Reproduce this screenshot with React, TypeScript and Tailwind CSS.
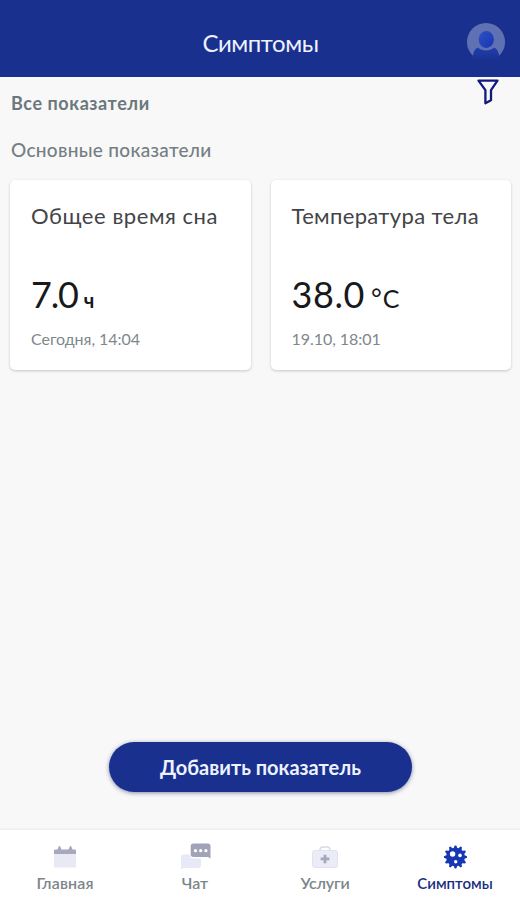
import type { ReactNode } from 'react';

interface Metric {
  title: string;
  value: string;
  unit: ReactNode;
  date: string;
  titleClass: string;
  valueClass: string;
  dateClass: string;
}

const metrics: Metric[] = [
  {
    title: 'Общее время сна',
    value: '7.0',
    unit: <span className="ml-[6px] text-[20px] font-bold">ч</span>,
    date: 'Сегодня, 14:04',
    titleClass: 'tracking-[0.55px]',
    valueClass: 'tracking-[-1.2px]',
    dateClass: 'tracking-[-0.05px]',
  },
  {
    title: 'Температура тела',
    value: '38.0',
    unit: (
      <>
        <span className="ml-[6px] text-[26px]">°</span>
        <span className="ml-px text-[25px]">C</span>
      </>
    ),
    date: '19.10, 18:01',
    titleClass: 'tracking-[0.35px]',
    valueClass: 'tracking-[0.6px]',
    dateClass: 'tracking-[-0.05px]',
  },
];

function AvatarIcon() {
  return (
    <svg width="38" height="38" viewBox="0 0 38 38">
      <defs>
        <linearGradient id="head" x1="0" y1="0" x2="1" y2="1">
          <stop offset="0" stopColor="#2c50c6" />
          <stop offset="1" stopColor="#1837b0" />
        </linearGradient>
        <linearGradient id="body" x1="0" y1="0" x2="0" y2="1">
          <stop offset="0" stopColor="#203fae" />
          <stop offset="1" stopColor="#1a308f" />
        </linearGradient>
      </defs>
      <path d="M6.3 33.2A19 19 0 1 1 31.7 33.2Z" fill="#6071b3" />
      <path d="M4.5 38L6.5 30C7.3 27 8.6 25.2 11.3 24.8C15.5 28.4 22.5 28.4 26.7 24.8C29.4 25.2 30.7 27 31.5 30L33.5 38Z" fill="url(#body)" />
      <ellipse cx="19.3" cy="16.4" rx="7.6" ry="8.5" fill="url(#head)" />
    </svg>
  );
}

function FilterIcon() {
  return (
    <svg width="22" height="26" viewBox="0 0 22 26" fill="none" stroke="#101b80" strokeWidth="2.3" strokeLinejoin="round">
      <path d="M1.5 1.6H20.5L14 11.2V21.2L8.4 24.2V11.2Z" />
    </svg>
  );
}

function CalendarIcon() {
  return (
    <svg width="22" height="22" viewBox="0 0 22 22">
      <path d="M0 8H22V21.5H0Z" fill="#e9e9f6" />
      <path d="M0 8V4.5Q0 3.5 1.5 3.5H3.5L5 0H6L7.5 3.5H14.5L16 0H17L18.5 3.5H20.5Q22 3.5 22 4.5V8Z" fill="#a7a8bd" />
    </svg>
  );
}

function ChatIcon() {
  return (
    <svg className="ml-[2px]" width="30" height="27" viewBox="0 0 30 27">
      <path d="M0 26.5V14Q0 11.5 2.5 11.5H9V13Q9 15.5 12 15.5H20V22Q20 25 17 25H3Z" fill="#e8e9f6" />
      <path d="M12.5 0.5H27Q29.5 0.5 29.5 3V15.5L27 14H12.5Q9.7 14 9.7 11.5V3Q9.7 0.5 12.5 0.5Z" fill="#a2a3b9" />
      <g fill="#fff">
        <circle cx="14.5" cy="7.7" r="1.6" />
        <circle cx="19.7" cy="7.7" r="1.6" />
        <circle cx="24.9" cy="7.7" r="1.6" />
      </g>
    </svg>
  );
}

function MedkitIcon() {
  return (
    <svg width="26" height="22" viewBox="0 0 26 22">
      <path d="M8 4.5V3.8Q8 1 11 1H15Q18 1 18 3.8V4.5" fill="none" stroke="#d8dae8" strokeWidth="1.5" />
      <rect x="0.5" y="4.5" width="25" height="17" rx="2.5" fill="#ebecf7" stroke="#e0e2f0" />
      <path d="M11.6 8.8H14.4V11.4H17.4V14.2H14.4V17.2H11.6V14.2H8.6V11.4H11.6Z" fill="#a5a7bf" />
    </svg>
  );
}

// spiky outline: 12 short teeth around the body
const spikes = Array.from({ length: 48 }, (_, i) => {
  const radius = i % 4 < 2 ? 11.6 : 9.3;
  const angle = ((i - 0.5) * Math.PI) / 24;
  return `${(12.5 + radius * Math.sin(angle)).toFixed(2)},${(12 - radius * Math.cos(angle)).toFixed(2)}`;
}).join(' ');

function VirusIcon() {
  return (
    <svg width="24" height="24" viewBox="0 0 24 24">
      <polygon points={spikes} fill="#1537b4" />
      <g fill="#fff">
        <circle cx="9.6" cy="9" r="2.7" />
        <circle cx="17" cy="10.4" r="1.8" />
        <circle cx="12.7" cy="16.8" r="1.7" />
      </g>
    </svg>
  );
}

const tabs = [
  { label: 'Главная', icon: <CalendarIcon />, labelClass: 'text-[#7c868a] text-base tracking-[0.15px]' },
  { label: 'Чат', icon: <ChatIcon />, labelClass: 'text-[#7c868a] text-base' },
  { label: 'Услуги', icon: <MedkitIcon />, labelClass: 'text-[#7c868a] text-base tracking-[-0.2px]' },
  { label: 'Симптомы', icon: <VirusIcon />, labelClass: 'text-[#1a2c80] text-[15px]' },
];

function MetricCard({ metric }: { metric: Metric }) {
  return (
    <div className="h-[190px] rounded-[5px] bg-white px-[21px] pt-5 whitespace-nowrap shadow-[0_1px_3px_rgba(0,0,0,0.2)]">
      <h3 className={`text-[22px] leading-8 text-[#434447] ${metric.titleClass}`}>{metric.title}</h3>
      <div className="mt-[39px] h-[46px] leading-[46px] text-[#18191b]">
        <span className={`text-[36px] ${metric.valueClass}`}>{metric.value}</span>
        {metric.unit}
      </div>
      <p className={`mt-[12px] text-base leading-5 text-[#80878b] ${metric.dateClass}`}>{metric.date}</p>
    </div>
  );
}

export default function App() {
  return (
    <div className="flex h-[900px] w-[520px] flex-col overflow-hidden bg-[#f8f8f8] font-[Lato,'Open_Sans',sans-serif]">
      <header className="grid h-[77px] shrink-0 grid-cols-[1fr_auto_1fr] bg-[#1a308f] pr-[15px]">
        <h1 className="col-start-2 mt-[27px] ml-[16px] text-2xl leading-8 tracking-[-0.45px] text-[#edf2ff]">Симптомы</h1>
        <button className="mt-[23px] h-[38px] justify-self-end">
          <AvatarIcon />
        </button>
      </header>

      <main className="flex flex-1 flex-col">
        <div className="flex items-start justify-between pr-[21px] pl-[11px]">
          <h2 className="mt-[14px] text-[18px] leading-6 font-bold tracking-[0.58px] text-[#6b777c]">Все показатели</h2>
          <button className="mt-[2px] h-[26px]">
            <FilterIcon />
          </button>
        </div>
        <h2 className="mt-[23px] ml-[11px] text-[19px] leading-6 font-medium tracking-[0.3px] text-[#747e83]">Основные показатели</h2>
        <div className="mt-[18px] grid grid-cols-2 gap-5 pr-[9px] pl-[10px]">
          {metrics.map(metric => (
            <MetricCard key={metric.title} metric={metric} />
          ))}
        </div>
        <button className="mt-auto mb-9 ml-[109px] h-[50px] w-[303px] rounded-full bg-[#1a308f] text-[20px] font-bold text-[#edf2ff] shadow-[0_1px_4px_rgba(20,30,90,0.5)]">
          Добавить показатель
        </button>
      </main>

      <nav className="grid h-[72px] shrink-0 grid-cols-4 border-t-2 border-[#f1f1f1] bg-white">
        {tabs.map(tab => (
          <button key={tab.label} className="flex flex-col items-center">
            <span className="mt-[11px] flex h-[31px] items-center justify-center">{tab.icon}</span>
            <span className={`mt-px leading-5 font-semibold ${tab.labelClass}`}>{tab.label}</span>
          </button>
        ))}
      </nav>
    </div>
  );
}
